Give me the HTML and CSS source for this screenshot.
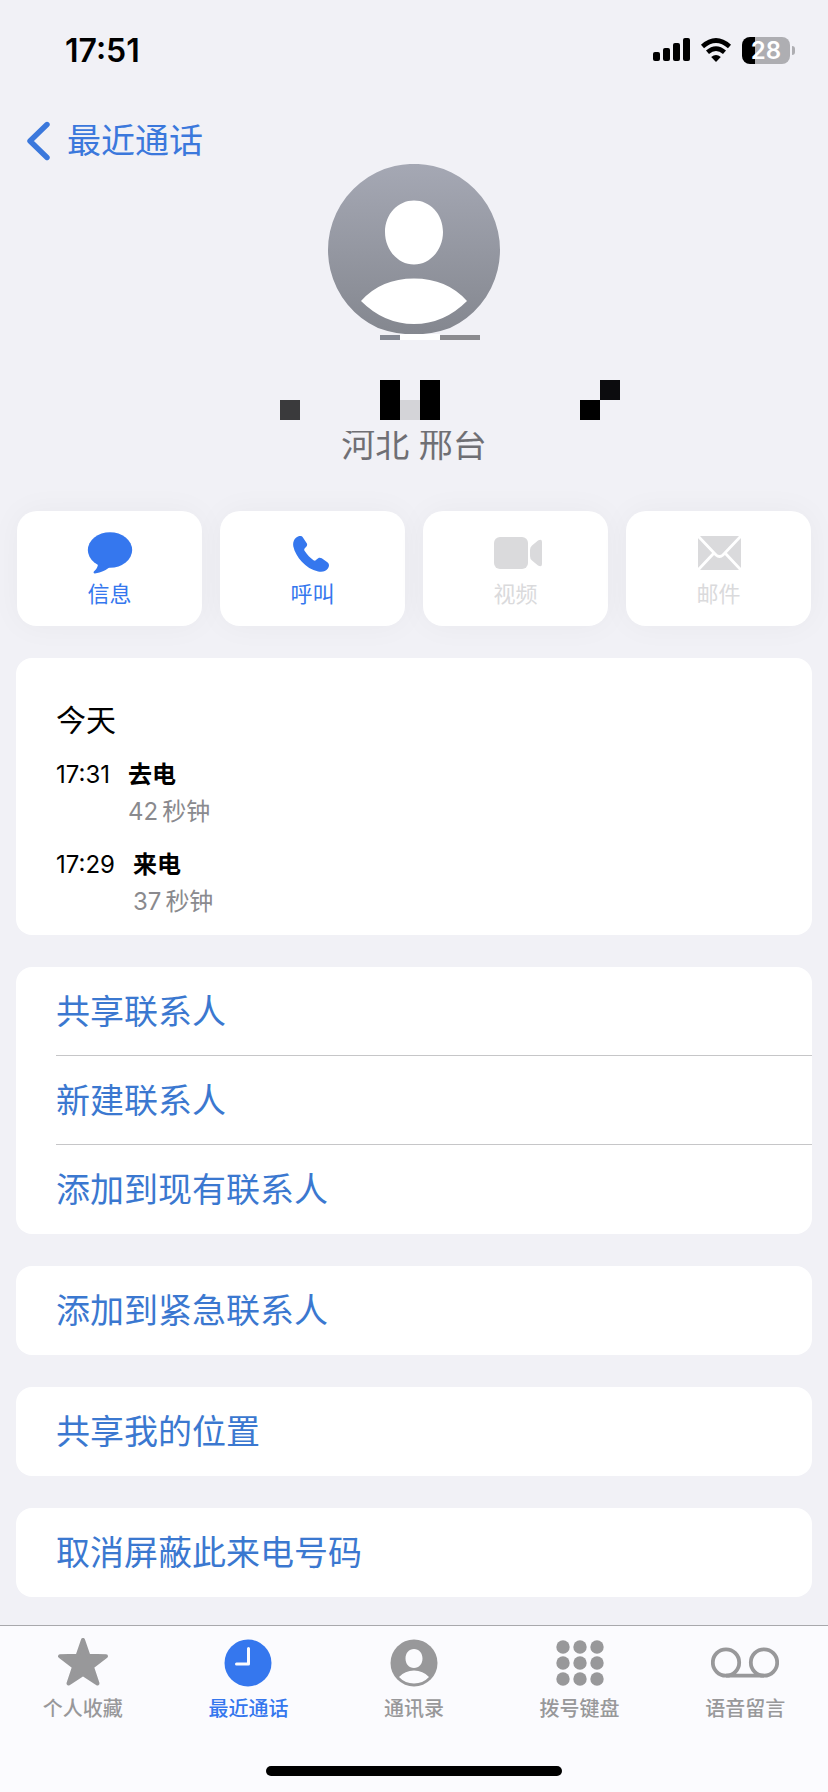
FILE: index.html
```html
<!DOCTYPE html>
<html lang="zh-CN">
<head>
<meta charset="utf-8">
<meta name="viewport" content="width=device-width, initial-scale=1">
<title>最近通话</title>
<link rel="stylesheet" href="styles.css">
</head>
<body>
<header class="status">
  <time class="clock">17:51</time>
  <div class="indicators">
    <svg width="37" height="24" viewBox="0 0 37 24" aria-hidden="true"><rect y="14" width="7" height="9" rx="2"/><rect x="10" y="10" width="7" height="13" rx="2"/><rect x="20" y="5" width="7" height="18" rx="2"/><rect x="30" width="7" height="23" rx="2"/></svg>
    <svg width="32" height="24" viewBox="0 0 32 24" aria-hidden="true"><path d="M2.500 8.500Q16-3.500 29.500 8.500M7.500 14.300Q16 7 24.500 14.300" fill="none" stroke="#000" stroke-width="4.600"/><path d="M11.200 19Q16 15.200 20.800 19L16 24Z"/></svg>
    <div class="battery"><span class="battery-body">28</span><span class="battery-cap"></span></div>
  </div>
</header>

<nav class="topbar">
  <a class="back" href="#recents">
    <svg width="23" height="40" viewBox="0 0 23 40" aria-hidden="true"><path d="M20 3.500 3 20 20 36.500" fill="none" stroke="currentColor" stroke-width="5.400" stroke-linecap="round" stroke-linejoin="round"/></svg>
    <span>最近通话</span>
  </a>
</nav>

<main class="content">
  <section class="profile">
    <svg class="avatar" width="172" height="176" viewBox="0 0 172 176" role="img" aria-label="联系人头像">
      <defs>
        <linearGradient id="shade" x1="0" y1="0" x2="0" y2="1"><stop offset="0" stop-color="#a5a8b4"/><stop offset="1" stop-color="#84878f"/></linearGradient>
      </defs>
      <path d="M50 164A86 86 0 1 1 122 164Q104 170.500 86 170.500T50 164Z" fill="url(#shade)"/>
      <path d="M86 36.500C102 36.500 115 50 115 68S102 100.500 86 100.500 57 86 57 68 70 36.500 86 36.500ZM33 137Q53 114.500 86 114.500T139 137Q116 160 86 160T33 137Z" fill="#fff"/>
      <path d="M52 171h20v5H52z" fill="#858994"/><path d="M72 170h40v6H72z" fill="#fff"/><path d="M112 171h40v5h-40z" fill="#8b8b8f"/>
    </svg>
    <svg class="mosaic" width="428" height="51" viewBox="0 0 428 51" shape-rendering="crispEdges" aria-hidden="true"><path d="M0 40h428v11H0z" fill="#f1f1f6"/><path d="M180 0h20v40h-20zM220 0h20v40h-20zM380 20h20v20h-20z"/><path d="M80 20h20v20H80z" fill="#3a3a3c"/><path d="M200 20h20v20h-20z" fill="#d4d4d8"/><path d="M400 0h20v20h-20z" fill="#0c0c0e"/></svg>
    <p class="region">河北 邢台</p>
  </section>

  <div class="actions">
    <button class="action" type="button">
      <svg width="46" height="44" viewBox="0 0 138 132" aria-hidden="true"><ellipse cx="69" cy="57" rx="66.500" ry="53.500" fill="currentColor"/><path d="M33 95Q34 108 23 119C17 124 20 128 27 127Q48 124 68 109Z" fill="currentColor"/></svg>
      <span>信息</span>
    </button>
    <button class="action" type="button">
      <svg width="40" height="44" viewBox="0 0 121 132" aria-hidden="true"><path transform="translate(0 14)" d="M9 6C17-1 26-1 30 5L42 23C44 28 42 32 37 36 33 40 33 43 36 47 43 58 52 67 62 74 66 77 69 75 72 71 77 65 82 65 87 68L103 79C110 83 111 92 105 100 99 108 89 110 76 108 38 99 8 63 1 32-1 22 2 12 9 6Z" fill="currentColor"/></svg>
      <span>呼叫</span>
    </button>
    <button class="action" type="button" disabled>
      <svg width="52" height="44" viewBox="-4 0 52 44" aria-hidden="true"><rect y="6" width="34" height="32" rx="6" fill="currentColor"/><path d="M36 19Q36 16 38 14.500L44 9.500Q48 7.500 48 11V33Q48 36.500 44 34.500L38 29.500Q36 28 36 25Z" fill="currentColor"/></svg>
      <span>视频</span>
    </button>
    <button class="action" type="button" disabled>
      <svg width="44" height="44" viewBox="0 0 44 44" aria-hidden="true"><rect x="1" y="5" width="43" height="34" rx="3" fill="currentColor"/><path d="M1 5 19 24Q22.500 27 26 24L44 5M1 39 17 22M44 39 28 22" fill="none" stroke="#fff" stroke-width="2.800"/></svg>
      <span>邮件</span>
    </button>
  </div>

  <section class="card history">
    <h2>今天</h2>
    <div class="call"><time>17:31</time><div><strong>去电</strong><p>42<span class="unit">秒钟</span></p></div></div>
    <div class="call"><time>17:29</time><div><strong>来电</strong><p>37<span class="unit">秒钟</span></p></div></div>
  </section>

  <div class="card">
    <button class="row" type="button">共享联系人</button>
    <button class="row" type="button">新建联系人</button>
    <button class="row" type="button">添加到现有联系人</button>
  </div>
  <div class="card"><button class="row" type="button">添加到紧急联系人</button></div>
  <div class="card"><button class="row" type="button">共享我的位置</button></div>
  <div class="card"><button class="row" type="button">取消屏蔽此来电号码</button></div>
</main>

<footer class="bottom">
  <nav class="tabs">
    <a class="tab" href="#favorites">
      <svg width="52" height="52" viewBox="0 0 52 52" aria-hidden="true"><path d="M26 4 31.500 19.800 49 20.200 35 31 40.500 47.500 26 38 11.500 47.500 17 31 3 20.200 20.500 19.800Z" fill="currentColor" stroke="currentColor" stroke-width="4" stroke-linejoin="round"/></svg>
      <span>个人收藏</span>
    </a>
    <a class="tab active" href="#recents" aria-current="page">
      <svg width="48" height="52" viewBox="0 0 48 52" aria-hidden="true"><circle cx="24" cy="27" r="23.500" fill="currentColor"/><path d="M24.500 12.500V28H12.500" fill="none" stroke="#fbfbfe" stroke-width="3" stroke-linecap="round" stroke-linejoin="round"/></svg>
      <span>最近通话</span>
    </a>
    <a class="tab" href="#contacts">
      <svg width="48" height="52" viewBox="0 0 48 52" aria-hidden="true"><circle cx="24" cy="27" r="23.500" fill="currentColor"/><path d="M24 13C29 13 32.500 17 32.500 22.500S29 32 24 32 15.500 28 15.500 22.500 19 13 24 13ZM9 41Q15 34.500 24 34.500T39 41Q33 47.500 24 47.500T9 41Z" fill="#fbfbfe"/></svg>
      <span>通讯录</span>
    </a>
    <a class="tab" href="#keypad">
      <svg width="48" height="52" viewBox="0 0 48 52" aria-hidden="true"><g fill="currentColor"><circle cx="7" cy="11" r="6.700"/><circle cx="24" cy="11" r="6.700"/><circle cx="41" cy="11" r="6.700"/><circle cx="7" cy="27" r="6.700"/><circle cx="24" cy="27" r="6.700"/><circle cx="41" cy="27" r="6.700"/><circle cx="7" cy="43" r="6.700"/><circle cx="24" cy="43" r="6.700"/><circle cx="41" cy="43" r="6.700"/></g></svg>
      <span>拨号键盘</span>
    </a>
    <a class="tab" href="#voicemail">
      <svg width="68" height="52" viewBox="0 0 68 52" aria-hidden="true"><g fill="none" stroke="currentColor" stroke-width="3.800"><circle cx="15" cy="26.500" r="13.200"/><circle cx="53" cy="26.500" r="13.200"/><path d="M15 39.700H53"/></g></svg>
      <span>语音留言</span>
    </a>
  </nav>
  <div class="home"></div>
</footer>
</body>
</html>
```
FILE: styles.css
```css
* { box-sizing: border-box; }

body {
  margin: 0;
  min-height: 100vh;
  display: flex;
  flex-direction: column;
  background: #f1f1f6;
  color: #000;
  font-family: Inter, "Noto Sans CJK SC", sans-serif;
}

svg { display: block; flex: none; }
button { border: 0; font: inherit; color: inherit; background: none; }
a { color: inherit; text-decoration: none; }
h2, p { margin: 0; font-weight: 400; }

.status {
  display: flex;
  justify-content: space-between;
  align-items: center;
  height: 100px;
  padding: 0 33px 0 65px;
}
.clock { font-size: 32px; font-weight: 600; }
.indicators { display: flex; align-items: center; gap: 10px; }
.battery { display: flex; align-items: center; gap: 2px; }
.battery-body {
  width: 48px;
  height: 27px;
  border-radius: 8px;
  background: linear-gradient(to right, #000 13px, #aeaeb2 13px);
  color: #fff;
  font-size: 24px;
  font-weight: 600;
  line-height: 27px;
  text-align: center;
}
.battery-cap { width: 3px; height: 9px; border-radius: 0 4px 4px 0; background: #aeaeb2; }

.topbar { height: 64px; padding: 16px 27px 0; }
.back {
  display: inline-flex;
  align-items: center;
  gap: 17px;
  height: 50px;
  color: #3b78dc;
  font-size: 34px;
  line-height: 50px;
}

.content { display: flex; flex-direction: column; gap: 32px; padding: 0 16px 27px; }

.profile { display: flex; flex-direction: column; align-items: center; }
.mosaic { position: relative; z-index: 1; margin-top: 40px; }
.region {
  margin-top: -11px;
  color: #6f6f74;
  font-size: 34px;
  line-height: 50px;
}

.actions { display: grid; grid-template-columns: repeat(4, 1fr); gap: 18px; margin: 9px 1px 0; }
.action {
  display: flex;
  flex-direction: column;
  align-items: center;
  gap: 5px;
  height: 115px;
  padding: 20px 0 0;
  border-radius: 20px;
  background: #fff;
  box-shadow: 0 0 32px rgba(0, 0, 0, 0.04);
  color: #3577ee;
  font-size: 22px;
  line-height: 28px;
}
.action:disabled { color: #dadadc; }

.card { border-radius: 16px; background: #fff; overflow: hidden; }
.history { padding: 40px 40px 15px; }
.history h2 { font-size: 30px; line-height: 44px; }
.call { display: flex; gap: 18px; margin-top: 14px; font-size: 24px; line-height: 37px; }
.call:nth-child(2) { margin-top: 14px; }
.call + .call { margin-top: 16px; }
h2 + .call { margin-top: 14px; }
.call strong { display: block; font-weight: 700; }
.call p { color: #8a8a8e; }
.unit { margin-left: 4px; }

.row {
  position: relative;
  display: block;
  width: 100%;
  height: 89px;
  padding: 0 40px;
  color: #3b78d0;
  font-size: 34px;
  line-height: 50px;
  text-align: left;
}
.row:not(:last-child)::after {
  content: "";
  position: absolute;
  right: 0;
  bottom: 0;
  left: 40px;
  height: 1px;
  background: #c6c6c8;
}

.bottom { margin-top: auto; border-top: 1px solid #a8a8ac; background: #fbfbfe; }
.tabs { display: grid; grid-template-columns: repeat(5, 1fr); }
.tab {
  display: flex;
  flex-direction: column;
  align-items: center;
  gap: 6px;
  padding-top: 10px;
  color: #98989a;
  font-size: 20px;
  font-weight: 500;
  line-height: 30px;
}
.active { color: #3577ee; }
.home { width: 296px; height: 10px; margin: 42px auto 16px; border-radius: 5px; background: #000; }
```
